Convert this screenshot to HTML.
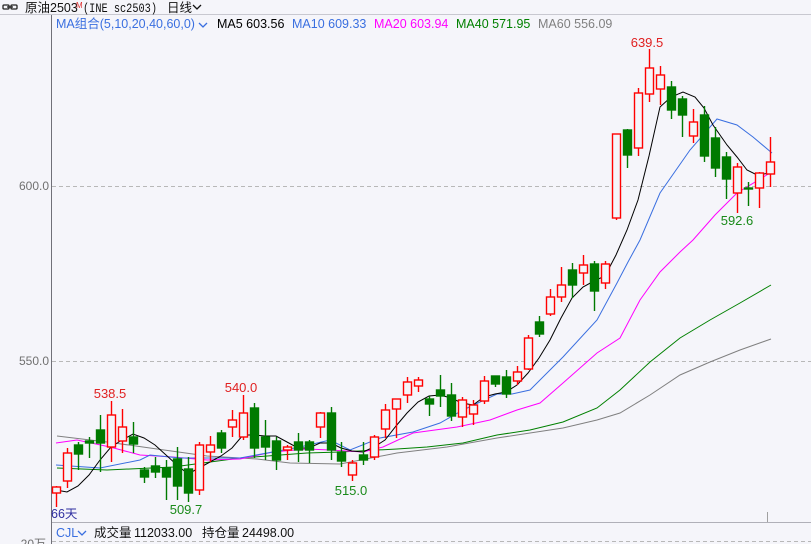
<!DOCTYPE html>
<html><head><meta charset="utf-8"><style>
body{margin:0;width:811px;height:544px;overflow:hidden;background:#f5f5fa;font-family:"Liberation Sans","Noto Sans CJK SC",sans-serif;}
svg{position:absolute;left:0;top:0}
</style></head><body>
<svg width="811" height="544" viewBox="0 0 811 544" xmlns="http://www.w3.org/2000/svg" font-family="Liberation Sans, Noto Sans CJK SC, sans-serif">
<rect width="811" height="544" fill="#f5f5fa"/>
<line x1="0" y1="14.5" x2="811" y2="14.5" stroke="#c8c8d0"/>
<line x1="51.5" y1="15" x2="51.5" y2="544" stroke="#707078"/>
<line x1="52" y1="186.5" x2="811" y2="186.5" stroke="#b8b8b8" stroke-dasharray="4,3"/>
<line x1="52" y1="361.5" x2="811" y2="361.5" stroke="#b8b8b8" stroke-dasharray="4,3"/>
<line x1="52" y1="522.5" x2="811" y2="522.5" stroke="#b0b0b8"/>
<line x1="52" y1="541.5" x2="811" y2="541.5" stroke="#b8b8b8" stroke-dasharray="4,3"/>
<line x1="767.5" y1="512" x2="767.5" y2="522" stroke="#a0a0a0"/>
<g fill="none" stroke="#222" stroke-width="1.3"><rect x="3" y="5" width="6" height="4" rx="1"/><rect x="11" y="5" width="6" height="4" rx="1"/><line x1="7" y1="7" x2="13" y2="7"/></g>
<text x="25" y="12" font-size="12.5" fill="#111">原油2503</text>
<text x="76" y="8" font-size="8" fill="#e03030">M</text>
<text x="83" y="12" font-size="13" fill="#111" font-family="Liberation Mono, monospace" textLength="74" lengthAdjust="spacingAndGlyphs">(INE sc2503)</text>
<text x="167" y="12" font-size="12.5" fill="#111">日线</text>
<path d="M193 5 L197 9 L201 5" fill="none" stroke="#111" stroke-width="1.3"/>
<text x="56" y="28" font-size="12.5" fill="#3a6fe0">MA组合(5,10,20,40,60,0)</text>
<path d="M199 23 L203 27 L207 23" fill="none" stroke="#3a6fe0" stroke-width="1.3"/>
<text x="217" y="28" font-size="12.5" fill="#000">MA5 603.56</text>
<text x="292" y="28" font-size="12.5" fill="#3a6fe0">MA10 609.33</text>
<text x="374" y="28" font-size="12.5" fill="#ff00ff">MA20 603.94</text>
<text x="456" y="28" font-size="12.5" fill="#008000">MA40 571.95</text>
<text x="538" y="28" font-size="12.5" fill="#808080">MA60 556.09</text>
<text x="49" y="190" font-size="12" fill="#707070" text-anchor="end">600.0</text>
<text x="49" y="365" font-size="12" fill="#707070" text-anchor="end">550.0</text>
<text x="46" y="548" font-size="12" fill="#707070" text-anchor="end">20万</text>
<g fill="none" stroke-width="1">
<polyline stroke="#808080" points="57,436 107,442 157,449 207,456 257,459 290,463 340,464 397,453 447,447 497,438 530,433 563,428 597,420 620,413 650,395 680,375 710,362 740,350 771,339"/>
<polyline stroke="#008000" points="57,468 107,470 173,467 240,458 307,453 340,452 397,449 427,447 463,443 497,435 530,430 563,422 597,408 620,390 650,362 680,338 710,320 740,303 771,285"/>
<polyline stroke="#ff00ff" points="56,443 77,440 110,447 140,455 173,457 207,460 240,459 273,452 307,449 330,450 363,452 383,447 413,433 457,427 490,420 517,410 540,403 563,383 597,353 620,338 640,300 660,272 680,252 693,240 715,215 737,193 770,173"/>
<polyline stroke="#3a6fe0" points="56,465 100,468 140,460 150,455 180,458 240,458 300,447 330,440 350,450 380,438 413,432 440,423 463,410 497,394 512,394 530,390 563,357 597,320 617,283 628,262 640,240 660,193 690,150 717,119 737,125 753,137 772,153"/>
<polyline stroke="#000" points="56,490 67,492 78,486 89,475 100,460 111,447 122,440 133,434 144,438 155,445 166,455 177,465 188,474 199,468 210,462 221,456 232,448 243,435 254,435 265,436 276,436 287,442 298,448 309,448 320,443 331,443 341,448 352,451 363,452 374,447 385,440 396,426 407,413 418,402 429,396 440,395 451,398 462,403 473,405 484,397 495,394 506,392 517,385 528,373 539,358 550,340 561,318 572,298 583,287 594,281 605,276 616,255 627,230 638,200 649,156 660,107 671,97 683,92 695,97 704,108 713,125 727,145 737,157 747,170 757,175 770,173"/>
</g>
<g stroke-width="1.4">
<g stroke="#ff0000" fill="#f5f5fa">
<line x1="56.5" y1="486" x2="56.5" y2="507"/><rect x="52.5" y="487" width="8" height="6"/>
<line x1="67.5" y1="448" x2="67.5" y2="488"/><rect x="63.5" y="453" width="8" height="28"/>
<line x1="111.5" y1="401" x2="111.5" y2="462"/><rect x="107.5" y="415" width="8" height="32"/>
<line x1="122.5" y1="409" x2="122.5" y2="453"/><rect x="118.5" y="427" width="8" height="14"/>
<line x1="199.5" y1="442" x2="199.5" y2="495"/><rect x="195.5" y="445" width="8" height="45"/>
<line x1="210.5" y1="436" x2="210.5" y2="462"/><rect x="206.5" y="445" width="8" height="7"/>
<line x1="232.5" y1="410" x2="232.5" y2="437"/><rect x="228.5" y="420" width="8" height="7"/>
<line x1="243.5" y1="395" x2="243.5" y2="440"/><rect x="239.5" y="413" width="8" height="24"/>
<line x1="287.5" y1="445" x2="287.5" y2="460"/><rect x="283.5" y="447" width="8" height="3"/>
<line x1="320.5" y1="412" x2="320.5" y2="438"/><rect x="316.5" y="413" width="8" height="14"/>
<line x1="352.5" y1="460" x2="352.5" y2="481"/><rect x="348.5" y="463" width="8" height="12"/>
<line x1="374.5" y1="435" x2="374.5" y2="460"/><rect x="370.5" y="437" width="8" height="20"/>
<line x1="385.5" y1="404" x2="385.5" y2="438"/><rect x="381.5" y="410" width="8" height="19"/>
<line x1="396.5" y1="399" x2="396.5" y2="438"/><rect x="392.5" y="399" width="8" height="10"/>
<line x1="407.5" y1="377" x2="407.5" y2="403"/><rect x="403.5" y="382" width="8" height="13"/>
<line x1="418.5" y1="377" x2="418.5" y2="392"/><rect x="414.5" y="380" width="8" height="6"/>
<line x1="462.5" y1="397" x2="462.5" y2="427"/><rect x="458.5" y="400" width="8" height="17"/>
<line x1="473.5" y1="400" x2="473.5" y2="425"/><rect x="469.5" y="405" width="8" height="9"/>
<line x1="484.5" y1="376" x2="484.5" y2="404"/><rect x="480.5" y="381" width="8" height="20"/>
<line x1="517.5" y1="366" x2="517.5" y2="385"/><rect x="513.5" y="372" width="8" height="9"/>
<line x1="528.5" y1="335" x2="528.5" y2="370"/><rect x="524.5" y="338" width="8" height="31"/>
<line x1="550.5" y1="289" x2="550.5" y2="316"/><rect x="546.5" y="297" width="8" height="17"/>
<line x1="561.5" y1="267" x2="561.5" y2="302"/><rect x="557.5" y="285" width="8" height="12"/>
<line x1="583.5" y1="255" x2="583.5" y2="285"/><rect x="579.5" y="265" width="8" height="8"/>
<line x1="605.5" y1="261" x2="605.5" y2="289"/><rect x="601.5" y="264" width="8" height="19"/>
<line x1="616.5" y1="134" x2="616.5" y2="220"/><rect x="612.5" y="134" width="8" height="84"/>
<line x1="638.5" y1="88" x2="638.5" y2="156"/><rect x="634.5" y="93" width="8" height="55"/>
<line x1="649.5" y1="49" x2="649.5" y2="102"/><rect x="645.5" y="68" width="8" height="26"/>
<line x1="660.5" y1="66" x2="660.5" y2="105"/><rect x="656.5" y="75" width="8" height="14"/>
<line x1="693.5" y1="109" x2="693.5" y2="143"/><rect x="689.5" y="122" width="8" height="14"/>
<line x1="737.5" y1="163" x2="737.5" y2="213"/><rect x="733.5" y="167" width="8" height="26"/>
<line x1="759.5" y1="172" x2="759.5" y2="208"/><rect x="755.5" y="173" width="8" height="15"/>
<line x1="770.5" y1="137" x2="770.5" y2="187"/><rect x="766.5" y="162" width="8" height="12"/>
</g>
<g stroke="#007a00" fill="#007a00">
<line x1="78.5" y1="442" x2="78.5" y2="470"/><rect x="74.5" y="445" width="8" height="9"/>
<line x1="89.5" y1="437" x2="89.5" y2="458"/><rect x="85.5" y="441" width="8" height="2"/>
<line x1="100.5" y1="415" x2="100.5" y2="472"/><rect x="96.5" y="430" width="8" height="13"/>
<line x1="133.5" y1="422" x2="133.5" y2="453"/><rect x="129.5" y="437" width="8" height="7"/>
<line x1="144.5" y1="467" x2="144.5" y2="483"/><rect x="140.5" y="470" width="8" height="7"/>
<line x1="155.5" y1="457" x2="155.5" y2="478"/><rect x="151.5" y="466" width="8" height="6"/>
<line x1="166.5" y1="460" x2="166.5" y2="500"/><rect x="162.5" y="468" width="8" height="9"/>
<line x1="177.5" y1="447" x2="177.5" y2="500"/><rect x="173.5" y="459" width="8" height="27"/>
<line x1="188.5" y1="457" x2="188.5" y2="502"/><rect x="184.5" y="469" width="8" height="24"/>
<line x1="221.5" y1="430" x2="221.5" y2="453"/><rect x="217.5" y="433" width="8" height="15"/>
<line x1="254.5" y1="403" x2="254.5" y2="458"/><rect x="250.5" y="408" width="8" height="40"/>
<line x1="265.5" y1="420" x2="265.5" y2="460"/><rect x="261.5" y="437" width="8" height="10"/>
<line x1="276.5" y1="437" x2="276.5" y2="470"/><rect x="272.5" y="441" width="8" height="19"/>
<line x1="298.5" y1="433" x2="298.5" y2="462"/><rect x="294.5" y="442" width="8" height="8"/>
<line x1="309.5" y1="440" x2="309.5" y2="463"/><rect x="305.5" y="442" width="8" height="8"/>
<line x1="331.5" y1="407" x2="331.5" y2="460"/><rect x="327.5" y="413" width="8" height="37"/>
<line x1="341.5" y1="442" x2="341.5" y2="467"/><rect x="337.5" y="452" width="8" height="9"/>
<line x1="363.5" y1="442" x2="363.5" y2="465"/><rect x="359.5" y="455" width="8" height="5"/>
<line x1="429.5" y1="396" x2="429.5" y2="416"/><rect x="425.5" y="399" width="8" height="5"/>
<line x1="440.5" y1="375" x2="440.5" y2="407"/><rect x="436.5" y="390" width="8" height="6"/>
<line x1="451.5" y1="383" x2="451.5" y2="421"/><rect x="447.5" y="395" width="8" height="21"/>
<line x1="495.5" y1="376" x2="495.5" y2="387"/><rect x="491.5" y="376" width="8" height="8"/>
<line x1="506.5" y1="370" x2="506.5" y2="398"/><rect x="502.5" y="377" width="8" height="17"/>
<line x1="539.5" y1="316" x2="539.5" y2="337"/><rect x="535.5" y="322" width="8" height="12"/>
<line x1="572.5" y1="263" x2="572.5" y2="298"/><rect x="568.5" y="270" width="8" height="15"/>
<line x1="594.5" y1="261" x2="594.5" y2="311"/><rect x="590.5" y="264" width="8" height="27"/>
<line x1="627.5" y1="129" x2="627.5" y2="168"/><rect x="623.5" y="130" width="8" height="25"/>
<line x1="671.5" y1="81" x2="671.5" y2="119"/><rect x="667.5" y="87" width="8" height="23"/>
<line x1="682.5" y1="96" x2="682.5" y2="137"/><rect x="678.5" y="99" width="8" height="16"/>
<line x1="704.5" y1="106" x2="704.5" y2="162"/><rect x="700.5" y="115" width="8" height="41"/>
<line x1="715.5" y1="127" x2="715.5" y2="177"/><rect x="711.5" y="138" width="8" height="30"/>
<line x1="726.5" y1="152" x2="726.5" y2="199"/><rect x="722.5" y="157" width="8" height="22"/>
<line x1="748.5" y1="182" x2="748.5" y2="206"/><rect x="744.5" y="188" width="8" height="1"/>
</g>
</g>
<g font-size="13">
<text x="647" y="47" fill="#e02020" text-anchor="middle">639.5</text>
<text x="110" y="398" fill="#e02020" text-anchor="middle">538.5</text>
<text x="241" y="392" fill="#e02020" text-anchor="middle">540.0</text>
<text x="186" y="514" fill="#1a8a1a" text-anchor="middle">509.7</text>
<text x="351" y="495" fill="#1a8a1a" text-anchor="middle">515.0</text>
<text x="737" y="225" fill="#1a8a1a" text-anchor="middle">592.6</text>
</g>
<text x="51" y="518" font-size="12.5" fill="#3030a0">66天</text>
<text x="56" y="537" font-size="12.5" fill="#3a6fe0">CJL</text>
<path d="M78 531 L82 535 L86 531" fill="none" stroke="#3a6fe0" stroke-width="1.3"/>
<g font-size="12.5" fill="#111">
<text x="94" y="537">成交量</text>
<text x="134" y="537">112033.00</text>
<text x="202" y="537">持仓量</text>
<text x="242" y="537">24498.00</text>
</g>
</svg>
</body></html>
